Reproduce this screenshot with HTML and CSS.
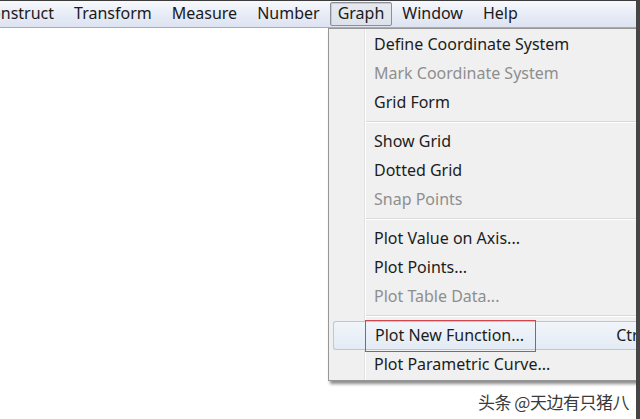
FILE: index.html
```html
<!DOCTYPE html>
<html>
<head>
<meta charset="utf-8">
<link rel="stylesheet" href="styles.css">
</head>
<body>
<div class="frame">
  <div class="menubar">
    <span class="mb-item first">Construct</span>
    <span class="mb-item">Transform</span>
    <span class="mb-item">Measure</span>
    <span class="mb-item">Number</span>
    <span class="mb-item open">Graph</span>
    <span class="mb-item">Window</span>
    <span class="mb-item">Help</span>
  </div>
  <div class="canvas"></div>

  <div class="dropdown">
    <div class="gutter"></div>
    <div class="item">Define Coordinate System</div>
    <div class="item disabled">Mark Coordinate System</div>
    <div class="item">Grid Form</div>
    <div class="sep"></div>
    <div class="item">Show Grid</div>
    <div class="item">Dotted Grid</div>
    <div class="item disabled">Snap Points</div>
    <div class="sep"></div>
    <div class="item">Plot Value on Axis...</div>
    <div class="item">Plot Points...</div>
    <div class="item disabled">Plot Table Data...</div>
    <div class="sep"></div>
    <div class="item hot"><span class="label mark">Plot New Function...</span><span class="shortcut">Ctrl+G</span></div>
    <div class="item">Plot Parametric Curve...</div>
  </div>

  <div class="watermark">头条 @天边有只猪八</div>
</div>
</body>
</html>
```
FILE: styles.css
```css
html, body {
  margin: 0;
  padding: 0;
  background: #ffffff;
  width: 640px;
  height: 419px;
  overflow: hidden;
}
body {
  font-family: "Noto Sans", "Open Sans", sans-serif;
  display: flex;
}
.frame {
  position: relative;
  width: 636px;
  height: 419px;
  overflow: hidden;
  border-right: 4px solid #454545;
  background: #ffffff;
}
.menubar {
  display: flex;
  align-items: center;
  height: 26px;
  border-top: 1px solid #3c3c3c;
  border-bottom: 1px solid #a9acb2;
  background: linear-gradient(#f7f9fc, #e6ebf5 55%, #dde3f1);
  font-size: 16px;
  color: #1a1a1a;
}
.mb-item {
  padding: 0 9px;
  height: 22px;
  line-height: 21px;
  border: 1px solid transparent;
  border-radius: 2px;
}
.mb-item.first {
  margin-left: -29px;
}
.mb-item.open {
  padding: 0 7px;
  border-color: #8a8f98;
  background: linear-gradient(#e6e9ef, #dde2ea);
  box-shadow: inset 1px 1px 0 #c5cad3;
}
.dropdown {
  position: absolute;
  left: 328px;
  top: 28px;
  width: 330px;
  padding-top: 1px;
  padding-bottom: 1px;
  background: #f0f0f0;
  border: 1px solid #979797;
  box-shadow: 2px 3px 3px rgba(0, 0, 0, 0.45);
  font-size: 16px;
  color: #1c1c1c;
}
.gutter {
  position: absolute;
  left: 35px;
  top: 0;
  bottom: 0;
  width: 1px;
  background: #e2e2e2;
  border-right: 1px solid #ffffff;
}
.item {
  position: relative;
  box-sizing: border-box;
  display: flex;
  align-items: center;
  height: 29px;
  padding-left: 45px;
  padding-bottom: 2px;
  white-space: nowrap;
}
.item.disabled {
  color: #8e8e8e;
}
.sep {
  position: relative;
  height: 10px;
  margin-left: 37px;
}
.sep::before {
  content: "";
  position: absolute;
  left: 0;
  right: 0;
  top: 4px;
  height: 1px;
  background: #d9d9d9;
  border-bottom: 1px solid #ffffff;
}
.item.hot {
  margin-left: 4px;
  padding-left: 41px;
  border: 1px solid #aecbe6;
  border-right: none;
  border-radius: 3px 0 0 3px;
  background: linear-gradient(#f1f5fa, #e3ebf4);
}
.label.mark {
  position: relative;
}
.label.mark::after {
  content: "";
  position: absolute;
  left: -10px;
  right: -12px;
  top: -4px;
  bottom: -6px;
  border: 1px solid #d2474e;
}
.shortcut {
  margin-left: 92px;
}
.watermark {
  position: absolute;
  left: 478px;
  top: 389px;
  font-family: "Noto Sans CJK SC", sans-serif;
  font-size: 17px;
  color: #3a3a3a;
  letter-spacing: -0.5px;
  text-shadow: 0 0 2px #ffffff, 0 0 2px #ffffff;
}
```
